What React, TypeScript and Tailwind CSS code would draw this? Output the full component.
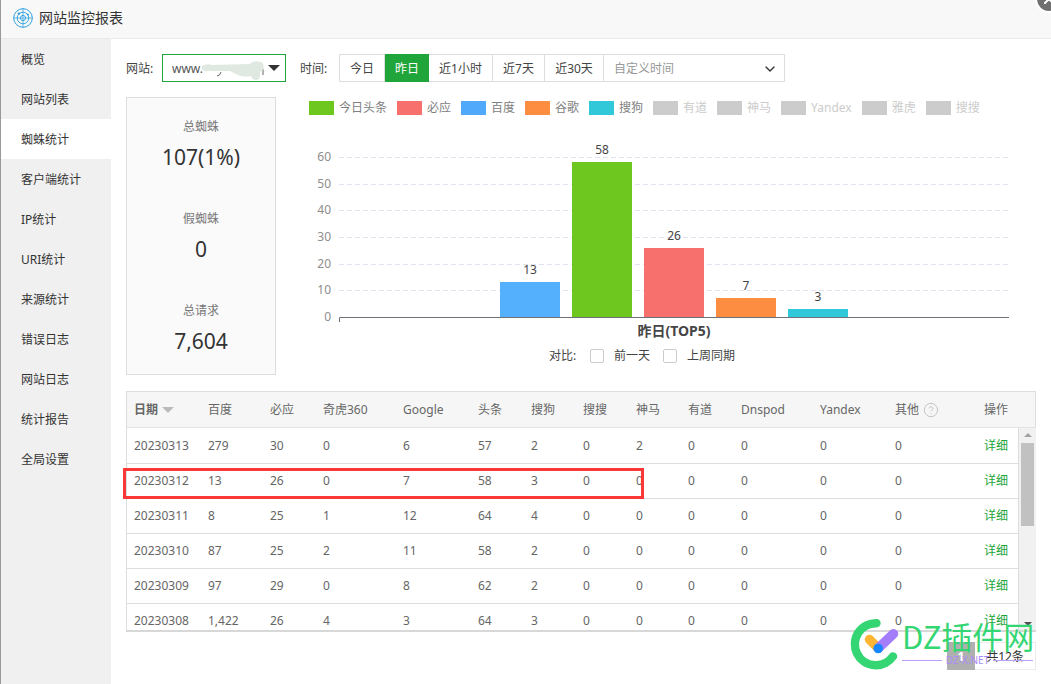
import React, { useState } from "react";
import { ChevronDown, CircleHelp } from "lucide-react";

const menu = [
  "概览",
  "网站列表",
  "蜘蛛统计",
  "客户端统计",
  "IP统计",
  "URI统计",
  "来源统计",
  "错误日志",
  "网站日志",
  "统计报告",
  "全局设置",
];

const ranges = [
  { label: "今日", width: "w-[45px]" },
  { label: "昨日", width: "w-[44px]" },
  { label: "近1小时", width: "w-16" },
  { label: "近7天", width: "w-[52px]" },
  { label: "近30天", width: "w-[59px]" },
];

const stats = [
  { label: "总蜘蛛", value: "107(1%)" },
  { label: "假蜘蛛", value: "0" },
  { label: "总请求", value: "7,604" },
];

const legend = [
  { name: "今日头条", color: "bg-[#6ec71e]" },
  { name: "必应", color: "bg-[#f7706d]" },
  { name: "百度", color: "bg-[#51a9fb]" },
  { name: "谷歌", color: "bg-[#fd8d40]" },
  { name: "搜狗", color: "bg-[#31c9d9]" },
  { name: "有道" },
  { name: "神马" },
  { name: "Yandex" },
  { name: "雅虎" },
  { name: "搜搜" },
];

const bars = [
  { value: 13, fill: "#54affc" },
  { value: 58, fill: "#6ec71e" },
  { value: 26, fill: "#f8706d" },
  { value: 7, fill: "#fd8d40" },
  { value: 3, fill: "#31c9d9" },
];

const columns = [
  { name: "日期", width: "w-[74px]" },
  { name: "百度", width: "w-[62px]" },
  { name: "必应", width: "w-[53px]" },
  { name: "奇虎360", width: "w-[80px]" },
  { name: "Google", width: "w-[75px]" },
  { name: "头条", width: "w-[53px]" },
  { name: "搜狗", width: "w-[52px]" },
  { name: "搜搜", width: "w-[53px]" },
  { name: "神马", width: "w-[52px]" },
  { name: "有道", width: "w-[53px]" },
  { name: "Dnspod", width: "w-[79px]" },
  { name: "Yandex", width: "w-[75px]" },
  { name: "其他", width: "w-[89px]" },
  { name: "操作", width: "w-[41px]" },
];

const rows = [
  ["20230313", "279", "30", "0", "6", "57", "2", "0", "2", "0", "0", "0", "0"],
  ["20230312", "13", "26", "0", "7", "58", "3", "0", "0", "0", "0", "0", "0"],
  ["20230311", "8", "25", "1", "12", "64", "4", "0", "0", "0", "0", "0", "0"],
  ["20230310", "87", "25", "2", "11", "58", "2", "0", "0", "0", "0", "0", "0"],
  ["20230309", "97", "29", "0", "8", "62", "2", "0", "0", "0", "0", "0", "0"],
  ["20230308", "1,422", "26", "4", "3", "64", "3", "0", "0", "0", "0", "0", "0"],
];

function RadarLogo() {
  return (
    <svg viewBox="0 0 20 20" className="size-5" fill="none" stroke="#2a9fe0">
      <circle cx="10" cy="10" r="9.3" strokeWidth="1" />
      <circle cx="10" cy="10" r="5.8" strokeWidth="0.9" />
      <circle cx="10" cy="10" r="2.6" strokeWidth="0.9" />
      <path d="M10 0.5v19M0.5 10h19" strokeWidth="0.7" />
      <circle cx="6" cy="5.6" r="0.8" fill="#2a9fe0" />
      <circle cx="14.8" cy="6.6" r="0.6" fill="#2a9fe0" />
    </svg>
  );
}

function BarChart() {
  const base = 192;
  const scale = 160 / 60;

  return (
    <svg viewBox="0 0 727 215" className="block h-auto w-full text-xs">
      {[0, 10, 20, 30, 40, 50, 60].map((tick) => {
        const y = Math.round(base - tick * scale) + 0.5;
        return (
          <g key={tick}>
            {tick > 0 && (
              <line x1="30" x2="700" y1={y} y2={y} stroke="#e0e3ef" strokeDasharray="5 3" />
            )}
            <text x="22" y={y + 3} textAnchor="end" fill="#8e8e8e">
              {tick}
            </text>
          </g>
        );
      })}
      {bars.map((bar, i) => {
        const x = 191 + i * 72;
        const height = Math.round(bar.value * scale);
        return (
          <g key={bar.fill}>
            <rect x={x} y={base - height} width="60" height={height} fill={bar.fill} />
            <text x={x + 30} y={base - height - 8} textAnchor="middle" fill="#444">
              {bar.value}
            </text>
          </g>
        );
      })}
      <path d="M30.5 197v-4.5H700" fill="none" stroke="#6e7079" />
      <text x="365" y="211" textAnchor="middle" fill="#464646" className="text-sm font-bold">
        昨日(TOP5)
      </text>
    </svg>
  );
}

function ColGroup() {
  return (
    <colgroup>
      {columns.map((col) => (
        <col key={col.name} className={col.width} />
      ))}
    </colgroup>
  );
}

function SpiderTable() {
  return (
    <div className="relative mt-4">
      <div className="border border-[#ddd] border-b-[#e3e3e3] bg-[#f6f6f6] pr-[17px]">
        <table className="w-full table-fixed border-collapse">
          <ColGroup />
          <thead>
            <tr className="h-[35px] text-left text-[#666]">
              {columns.map((col, i) => (
                <th
                  key={col.name}
                  className={`whitespace-nowrap pl-[7px] ${i === 0 ? "font-bold" : "font-normal"}`}
                >
                  <span className="inline-flex items-center gap-1">
                    {col.name}
                    {i === 0 && (
                      <svg viewBox="0 0 12 6" className="h-[6px] w-3">
                        <path d="M0 0h12L6 6z" fill="#bbb" />
                      </svg>
                    )}
                    {col.name === "其他" && (
                      <CircleHelp className="size-4 text-[#c4c4c4]" strokeWidth={1.5} />
                    )}
                  </span>
                </th>
              ))}
            </tr>
          </thead>
        </table>
      </div>
      <div className="flex h-[204px] border-b-2 border-l border-b-[#d8d8d8] border-l-[#ddd]">
        <div className="flex-1 overflow-hidden">
          <table className="w-full table-fixed border-collapse">
            <ColGroup />
            <tbody>
              {rows.map((row) => (
                <tr key={row[0]} className="h-[35px] border-b border-[#ddd] text-[#666]">
                  {row.map((cell, i) => (
                    <td key={i} className="pl-[7px] pt-px">
                      {cell}
                    </td>
                  ))}
                  <td className="pl-[7px] pt-px">
                    <a href="#detail" className="whitespace-nowrap text-[#20a53a]">
                      详细
                    </a>
                  </td>
                </tr>
              ))}
            </tbody>
          </table>
        </div>
        {/* Scrollbar */}
        <div className="flex w-[18px] flex-col items-center border-l border-[#ddd] bg-[#f1f1f1] py-1">
          <svg viewBox="0 0 8 4" className="mt-px h-1 w-2">
            <path d="M0 4h8L4 0z" fill="#a3a3a3" />
          </svg>
          <div className="mt-[6px] h-[83px] w-[13px] bg-[#c1c1c1]"></div>
          <svg viewBox="0 0 8 4" className="mt-auto h-1 w-2">
            <path d="M0 0h8L4 4z" fill="#505050" />
          </svg>
        </div>
      </div>
      {/* Highlight around the compared day */}
      <div className="pointer-events-none absolute -left-[3px] top-[77px] h-[31px] w-[521px] border-3 border-[#fc3737]"></div>
    </div>
  );
}

function Watermark() {
  return (
    <div className="pointer-events-none absolute right-[3px] -top-6 flex items-center gap-[2px]">
      <svg viewBox="0 0 50 52" className="h-[52px] w-[50px]" fill="none" strokeLinecap="round">
        <path d="M26.500 5.200A21 21 0 1 0 43 38.400" stroke="#34d673" strokeWidth="8.400" />
        <path d="M19.500 21.500l8.500 8.500" stroke="#ffb534" strokeWidth="9.500" />
        <path d="M28.500 30L43.500 15.800" stroke="#a47dfb" strokeWidth="9.500" />
        <circle cx="28.200" cy="30.500" r="4.800" fill="#1688ff" />
      </svg>
      <div className="w-[131px]">
        <div className="whitespace-nowrap font-['Noto_Sans_CJK_SC',sans-serif] text-[31px] leading-7 text-[#34d673]">
          DZ插件网
        </div>
        <div className="mt-1 flex items-center gap-1 text-[10px] leading-3 text-[#a98bfb]">
          <span className="h-px flex-1 bg-[#b9a0fb]"></span>
          DZ-X.NET
          <span className="h-px flex-1 bg-[#b9a0fb]"></span>
        </div>
      </div>
    </div>
  );
}

export default function App() {
  const [active, setActive] = useState("蜘蛛统计");
  const [range, setRange] = useState("昨日");

  return (
    <div className="relative flex min-h-screen flex-col overflow-hidden border-l border-[#999] bg-white font-['Noto_Sans','Noto_Sans_CJK_SC',sans-serif] text-xs text-[#444]">
      {/* Header */}
      <header className="flex h-[39px] items-center gap-[6px] border-b border-[#ebebeb] bg-[#f8f8f8] pb-[3px] pl-3">
        <RadarLogo />
        <h1 className="text-sm text-[#333]">网站监控报表</h1>
      </header>
      <button
        aria-label="关闭"
        className="absolute -right-[10px] -top-[13px] flex size-6 items-center justify-center rounded-full bg-[#707070] ring-2 ring-white"
      >
        <svg viewBox="0 0 10 10" className="size-[10px]" stroke="#fff" strokeWidth="2">
          <path d="M0 0l10 10M10 0L0 10" />
        </svg>
      </button>

      <div className="flex flex-1">
        {/* Sidebar */}
        <nav className="w-[110px] shrink-0 bg-[#f0f0f0]">
          {menu.map((item) => (
            <button
              key={item}
              onClick={() => setActive(item)}
              className={`block h-10 w-full pl-5 pt-[2px] text-left text-[#333] ${
                active === item ? "bg-white" : ""
              }`}
            >
              {item}
            </button>
          ))}
        </nav>

        <main className="min-w-0 flex-1 px-[15px] pb-[14px] pt-[15px]">
          {/* Filters */}
          <div className="flex h-7 items-center">
            <label htmlFor="site" className="w-9 whitespace-nowrap pt-[2px]">
              网站:
            </label>
            <div className="relative">
              <select
                id="site"
                className="h-7 w-[124px] appearance-none border border-[#20a53a] bg-white pl-[9px] pt-[2px] text-[#555]"
              >
                <option>www.</option>
              </select>
              {/* Domain is smudged out */}
              <svg
                viewBox="0 0 66 20"
                className="pointer-events-none absolute left-[38px] top-[6px] h-5 w-[66px]"
              >
                <path d="M17 16q3 0 4-4M63 9v6" stroke="#666" fill="none" />
                <path
                  d="M2 6q5-3 10-1l38-1q3-4 11-2q4 2 2 8l-3 2q1 8-4 8q-4 0-5-4q-8 2-15-2l-6-3H8Q0 12 2 6z"
                  fill="#dfe8e1"
                />
              </svg>
              <svg
                viewBox="0 0 12 6"
                className="pointer-events-none absolute right-[6px] top-[11px] h-[6px] w-3"
              >
                <path d="M0 0h12L6 6z" fill="#333" />
              </svg>
            </div>
            <span className="ml-[14px] w-[39px] whitespace-nowrap pt-[2px]">时间:</span>
            <div className="flex h-7 border border-[#ddd]">
              {ranges.map((r) => (
                <button
                  key={r.label}
                  onClick={() => setRange(r.label)}
                  className={`whitespace-nowrap pt-[2px] ${r.width} ${
                    range === r.label
                      ? "-my-px bg-[#20a53a] text-white"
                      : "border-r border-[#ddd]"
                  }`}
                >
                  {r.label}
                </button>
              ))}
              <button className="flex w-[180px] items-center justify-between pl-[10px] pr-[6px] pt-[2px] text-[#999]">
                自定义时间
                <ChevronDown className="size-4 text-[#333]" />
              </button>
            </div>
          </div>

          <div className="mt-[15px] flex gap-[33px]">
            {/* Totals */}
            <div className="flex h-[278px] w-[150px] shrink-0 flex-col gap-9 border border-[#ddd] bg-[#fafafa] pt-[19px] text-center">
              {stats.map((s) => (
                <div key={s.label}>
                  <div className="leading-5 text-[#777]">{s.label}</div>
                  <div className="mt-1 text-[21px] leading-8 text-[#333]">{s.value}</div>
                </div>
              ))}
            </div>

            {/* Chart */}
            <div className="min-w-0 flex-1">
              <ul className="flex h-[22px] items-center gap-[10px]">
                {legend.map((item) => (
                  <li
                    key={item.name}
                    className={`flex items-center gap-[5px] whitespace-nowrap ${
                      item.color ? "text-[#808080]" : "text-[#ccc]"
                    }`}
                  >
                    <span className={`h-[14px] w-[25px] ${item.color ?? "bg-[#ccc]"}`}></span>
                    {item.name}
                  </li>
                ))}
              </ul>
              <div className="mt-[6px]">
                <BarChart />
              </div>
              <div className="mt-2 flex items-center pl-60">
                <span className="w-[41px]">对比:</span>
                <label className="flex items-center gap-[10px]">
                  <input
                    type="checkbox"
                    className="size-[14px] appearance-none rounded-xs border border-[#ccc]"
                  />
                  前一天
                </label>
                <label className="ml-[13px] flex items-center gap-[10px]">
                  <input
                    type="checkbox"
                    className="size-[14px] appearance-none rounded-xs border border-[#ccc]"
                  />
                  上周同期
                </label>
              </div>
            </div>
          </div>

          <SpiderTable />

          {/* Pagination */}
          <div className="relative mt-[10px] flex h-7 justify-end">
            <button className="w-7 bg-[#b0b0b0] pt-[2px] text-xs font-bold text-white">1</button>
            <span className="flex w-[61px] items-center justify-center border border-l-0 border-[#ececec] pt-[2px] text-[#333]">
              共12条
            </span>
            <Watermark />
          </div>
        </main>
      </div>
    </div>
  );
}
